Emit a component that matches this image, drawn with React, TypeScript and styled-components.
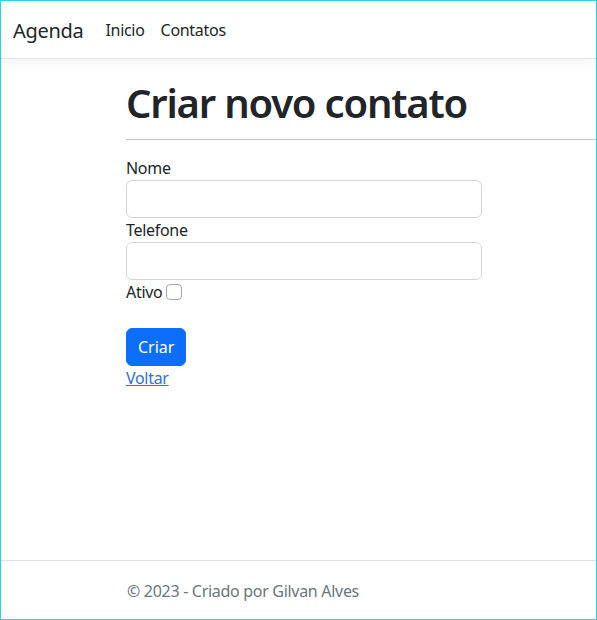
import React from "react";
import styled, { createGlobalStyle } from "styled-components";

const fontStack = `"Noto Sans", "Open Sans", "Liberation Sans", sans-serif`;

const GlobalStyle = createGlobalStyle`
  html, body {
    margin: 0;
    padding: 0;
    background: #fff;
  }
  body {
    font-family: ${fontStack};
    font-size: 16px;
    line-height: 1.5;
    letter-spacing: -0.3px;
    color: #212529;
  }
  *, *::before, *::after {
    box-sizing: border-box;
  }
`;

const Frame = styled.div`
  display: flex;
  flex-direction: column;
  height: 620px;
  border: 1px solid #30cfe2;
  overflow: hidden;
`;

const NavBar = styled.nav`
  display: flex;
  align-items: center;
  height: 58px;
  padding: 0 12px;
  border-bottom: 1px solid #e4e4e4;
  box-shadow: 0 4px 12px rgba(0, 0, 0, 0.05);
`;

const Brand = styled.a`
  font-size: 20px;
  line-height: 30px;
  padding-top: 2px;
  color: #212529;
  text-decoration: none;
  margin-right: 14px;
`;

const NavLinks = styled.ul`
  display: flex;
  list-style: none;
  margin: 0;
  padding: 0;
`;

const NavLink = styled.a`
  display: block;
  padding: 9px 8px 8px;
  color: #212529;
  text-decoration: none;
`;

const Main = styled.main`
  flex: 1;
  padding-left: 125px;
`;

const Title = styled.h1`
  font-size: 40px;
  font-weight: 600;
  line-height: 48px;
  letter-spacing: -1.2px;
  margin: 20px 0 12px;
`;

const Rule = styled.hr`
  border: 0;
  border-top: 1px solid #c7c7c7;
  margin: 0 0 16px;
`;

const Form = styled.form`
  width: 356px;
`;

const Label = styled.label`
  display: block;
`;

const Input = styled.input`
  display: block;
  width: 100%;
  height: 38px;
  padding: 6px 12px;
  font: inherit;
  border: 1px solid #d6d6d6;
  border-radius: 6px;
`;

const CheckRow = styled.label`
  display: flex;
  align-items: center;
  gap: 4px;
`;

const Check = styled.input`
  appearance: none;
  width: 16px;
  height: 16px;
  margin: 0;
  border: 1px solid #a8a8a8;
  border-radius: 4px;
  background: #fff;
`;

const Button = styled.button`
  display: block;
  margin-top: 24px;
  height: 38px;
  padding: 6px 11px;
  font: inherit;
  color: #fff;
  background: #0d6efd;
  border: 1px solid #0d6efd;
  border-radius: 6px;
`;

const BackLink = styled.a`
  color: #2f6fd6;
  text-decoration: underline;
`;

const Footer = styled.footer`
  flex: none;
  height: 59px;
  border-top: 1px solid #dee2e6;
  line-height: 60px;
  padding-left: 126px;
  color: #6c757d;
  white-space: nowrap;
`;

export default function App() {
  return (
    <>
      <GlobalStyle />
      <Frame>
        <NavBar>
          <Brand href="#">Agenda</Brand>
          <NavLinks>
            <li>
              <NavLink href="#">Inicio</NavLink>
            </li>
            <li>
              <NavLink href="#">Contatos</NavLink>
            </li>
          </NavLinks>
        </NavBar>
        <Main>
          <Title>Criar novo contato</Title>
          <Rule />
          <Form onSubmit={(e) => e.preventDefault()}>
            <Label htmlFor="nome">Nome</Label>
            <Input id="nome" type="text" />
            <Label htmlFor="telefone">Telefone</Label>
            <Input id="telefone" type="text" />
            <CheckRow>
              Ativo <Check type="checkbox" />
            </CheckRow>
            <Button type="submit">Criar</Button>
            <BackLink href="#">Voltar</BackLink>
          </Form>
        </Main>
        <Footer>© 2023 - Criado por Gilvan Alves</Footer>
      </Frame>
    </>
  );
}
